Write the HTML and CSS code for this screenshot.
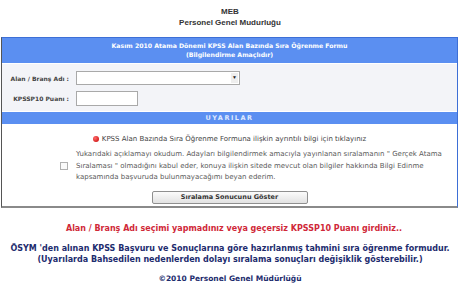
FILE: index.html
```html
<!DOCTYPE html>
<html>
<head>
<meta charset="utf-8">
<link rel="stylesheet" href="styles.css">
</head>
<body>
<div class="page">
  <div class="title">MEB<br>Personel Genel Mudurluğu</div>
  <div class="box">
    <div class="box-head">Kasım 2010 Atama Dönemi KPSS Alan Bazında Sıra Öğrenme Formu<br>(Bilgilendirme Amaçlıdır)</div>
    <div class="form-area">
      <div class="row">
        <span class="label">Alan / Branş Adı :</span>
        <span class="select"><span class="arrow">▼</span></span>
      </div>
      <div class="row">
        <span class="label">KPSSP10 Puanı :</span>
        <span class="input"></span>
      </div>
    </div>
    <div class="bar">UYARILAR</div>
    <div class="warn">
      <div class="link"><span class="dot"></span>KPSS Alan Bazında Sıra Öğrenme Formuna ilişkin ayrıntılı bilgi için tıklayınız</div>
      <div class="agree">
        <span class="check"></span>
        <p class="agree-text">Yukarıdaki açıklamayı okudum. Adayları bilgilendirmek amacıyla yayınlanan sıralamanın " Gerçek Atama Sıralaması " olmadığını kabul eder, konuya ilişkin sitede mevcut olan bilgiler hakkında Bilgi Edinme kapsamında başvuruda bulunmayacağımı beyan ederim.</p>
      </div>
      <div class="btn-row"><span class="btn">Sıralama Sonucunu Göster</span></div>
    </div>
  </div>
  <p class="msg">Alan / Branş Adı seçimi yapmadınız veya geçersiz KPSSP10 Puanı girdiniz..</p>
  <p class="info">ÖSYM 'den alınan KPSS Başvuru ve Sonuçlarına göre hazırlanmış tahmini sıra öğrenme formudur.<br>(Uyarılarda Bahsedilen nedenlerden dolayı sıralama sonuçları değişiklik gösterebilir.)</p>
  <p class="copy">©2010 Personel Genel Müdürlüğü</p>
</div>
</body>
</html>
```
FILE: styles.css
```css
html, body {
  margin: 0;
  padding: 0;
  background: #ffffff;
}
.page {
  width: 460px;
  height: 288px;
  overflow: hidden;
}
.title {
  font-family: "Liberation Sans", Arial, sans-serif;
  font-weight: bold;
  font-size: 8px;
  line-height: 11px;
  color: #333;
  text-align: center;
  padding-top: 6px;
}
.box {
  margin: 9px 2px 0 1px;
  border: 1px solid #3d6fd6;
  border-bottom: 2px solid #8a8a8a;
  border-left-color: #555;
}
.box-head {
  background: #5b8ff1;
  color: #fff;
  font-family: "DejaVu Sans", Verdana, sans-serif;
  font-size: 6.2px;
  font-weight: bold;
  line-height: 9px;
  text-align: center;
  padding: 3px 0 4px;
  border-bottom: 1px solid #fff;
}
.form-area {
  background: #f3f4f8;
  padding: 7px 0 5px;
  display: flex;
  flex-direction: column;
  gap: 6px;
}
.row {
  display: flex;
  align-items: center;
}
.label {
  width: 67px;
  text-align: right;
  padding-right: 7px;
  font-family: "DejaVu Sans", Verdana, sans-serif;
  font-weight: bold;
  font-size: 6px;
  color: #444;
}
.select {
  width: 162px;
  height: 12px;
  border: 1px solid #a9a9a9;
  background: #fff;
  position: relative;
}
.arrow {
  position: absolute;
  right: 1px;
  top: 1px;
  width: 7px;
  height: 10px;
  background: #eee;
  font-size: 5px;
  line-height: 10px;
  text-align: center;
  color: #222;
}
.input {
  width: 60px;
  height: 13px;
  border: 1px solid #a9a9a9;
  background: #fff;
}
.bar {
  background: #5b8ff1;
  color: #dfe9ff;
  font-family: "DejaVu Sans", Verdana, sans-serif;
  font-weight: bold;
  font-size: 6.5px;
  letter-spacing: 1.5px;
  text-align: center;
  line-height: 12px;
  margin-top: 1px;
}
.warn {
  background: #ffffff;
  font-family: "DejaVu Sans", Tahoma, sans-serif;
  font-size: 7px;
  color: #5a5a5a;
  padding: 11px 0 2px;
}
.link {
  text-align: center;
  display: flex;
  justify-content: center;
  align-items: center;
  gap: 3px;
  color: #444;
}
.dot {
  width: 6px;
  height: 6px;
  border-radius: 50%;
  background: radial-gradient(circle at 35% 35%, #ff6b6b, #c40000);
}
.agree {
  display: flex;
  align-items: center;
  margin-top: 6px;
  padding-left: 58px;
  gap: 8px;
}
.check {
  width: 6px;
  height: 6px;
  border: 1px solid #b0b0b0;
  background: #fafafa;
  flex: none;
}
.agree-text {
  margin: 0;
  line-height: 11.5px;
  width: 386px;
}
.btn-row {
  display: flex;
  justify-content: center;
  margin-top: 7px;
}
.btn {
  width: 154px;
  height: 11px;
  border: 1px solid #8f8f8f;
  border-radius: 2px;
  background: linear-gradient(#fbfbfb, #e2e2e2);
  font-family: "DejaVu Sans", Tahoma, sans-serif;
  font-size: 6.5px;
  font-weight: bold;
  color: #333;
  text-align: center;
  line-height: 11px;
}
.msg {
  margin: 16px 0 0;
  padding-left: 8px;
  text-align: center;
  font-family: "DejaVu Sans", Verdana, sans-serif;
  font-weight: bold;
  font-size: 8px;
  color: #d02838;
}
.info {
  margin: 10px 0 0;
  text-align: center;
  font-family: "DejaVu Sans", Verdana, sans-serif;
  font-weight: bold;
  font-size: 8px;
  line-height: 11px;
  color: #1d2c6e;
}
.copy {
  margin: 9px 0 0;
  text-align: center;
  font-family: "DejaVu Sans", Verdana, sans-serif;
  font-weight: bold;
  font-size: 7.5px;
  color: #1d2c6e;
}
```
